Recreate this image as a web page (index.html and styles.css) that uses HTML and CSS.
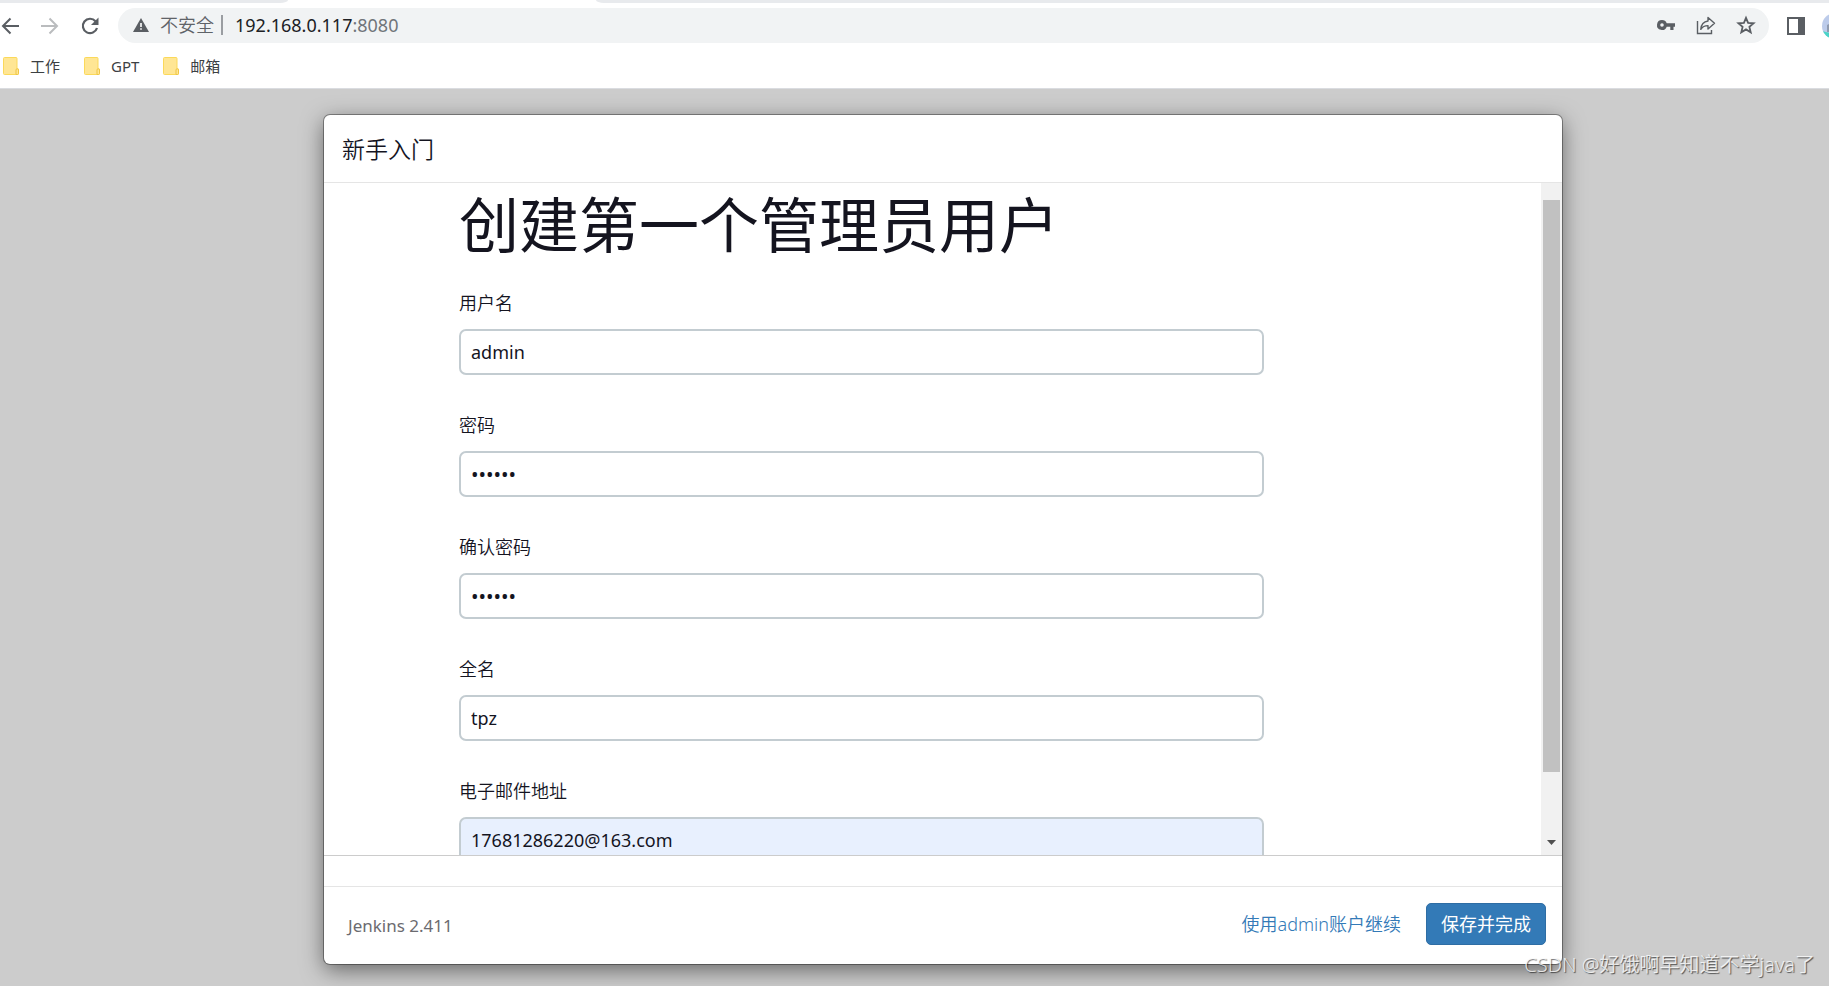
FILE: index.html
```html
<!DOCTYPE html>
<html lang="zh-CN">
<head>
<meta charset="utf-8">
<title>新手入门 [Jenkins]</title>
<link rel="stylesheet" href="styles.css">
</head>
<body>
<header class="browser">
  <div class="tabstrip"><span class="tab-left"></span><span class="tab-right"></span></div>
  <div class="toolbar">
    <nav class="nav-buttons">
      <button type="button" class="icon-button" aria-label="后退"><svg width="20" height="20" viewBox="0 0 20 20" fill="none" stroke="#5a5e63" stroke-width="2"><path d="M19 10H3M10.500 2.500L3 10l7.500 7.500"/></svg></button>
      <button type="button" class="icon-button" aria-label="前进"><svg width="20" height="20" viewBox="0 0 20 20" fill="none" stroke="#babcbe" stroke-width="2"><path d="M1 10h16M9.500 2.500L17 10l-7.500 7.500"/></svg></button>
      <button type="button" class="icon-button" aria-label="重新加载"><svg width="20" height="20" viewBox="0 0 20 20"><path d="M15.500 5.200A7.200 7.200 0 1 0 17 12" fill="none" stroke="#5a5e63" stroke-width="2.200"/><path d="M18.500 1.500v7.500H11z" fill="#5a5e63"/></svg></button>
    </nav>
    <div class="omnibox">
      <button type="button" class="security"><svg width="16" height="14" viewBox="0 0 16 14"><path d="M8 0l8 14H0z" fill="#5a5e63"/><path d="M7.200 5h1.600v4H7.200zM7.200 10.200h1.600v1.600H7.200z" fill="#fff"/></svg><span>不安全</span></button>
      <span class="separator"></span>
      <div class="url">192.168.0.117<span class="port">:8080</span></div>
      <div class="omni-actions">
        <button type="button" class="icon-button" aria-label="密码"><svg width="20" height="20" viewBox="0 0 20 20"><path fill="#5a5e63" fill-rule="evenodd" d="M6 5a5 5 0 1 0 4.700 6.700h3.600V15h3.200v-3.300H19V8.300h-8.300A5 5 0 0 0 6 5zm0 3.200a1.800 1.800 0 1 1 0 3.600 1.800 1.800 0 0 1 0-3.600z"/></svg></button>
        <button type="button" class="icon-button" aria-label="分享"><svg width="20" height="20" viewBox="0 0 20 20" fill="none" stroke="#5a5e63" stroke-width="1.400"><path d="M1.500 6v12.500h14V15"/><path d="M12 2.500l6.500 5.800L12 14v-3.400c-3.300 0-5.500 1-7.200 3.700.4-4.500 2.800-7.700 7.200-8.300z" stroke-linejoin="round"/></svg></button>
        <button type="button" class="icon-button" aria-label="收藏"><svg width="20" height="20" viewBox="0 0 20 20"><path d="M10 2.800l2.100 5.100 5.500.4-4.200 3.600 1.300 5.400L10 14.400l-4.700 2.900 1.300-5.400-4.200-3.600 5.500-.4z" fill="none" stroke="#5a5e63" stroke-width="1.800"/></svg></button>
      </div>
    </div>
    <button type="button" class="icon-button" aria-label="侧边栏"><svg width="20" height="20" viewBox="0 0 20 20"><path fill="#5a5e63" fill-rule="evenodd" d="M1 1h18v18H1zm2 2v14h9V3z"/></svg></button>
    <button type="button" class="avatar" aria-label="个人资料"><svg width="26" height="26" viewBox="0 0 26 26"><defs><clipPath id="round"><circle cx="13" cy="13" r="13"/></clipPath></defs><g clip-path="url(#round)"><path fill="#bccbea" d="M0 0h26v26H0z"/><path fill="#8f9bb0" d="M5 12l4-2v9H5z"/><path fill="#4bd5c8" d="M0 18l8 2h18v6H0z"/></g></svg></button>
  </div>
  <nav class="bookmarks">
    <a class="bookmark" href="#"><svg class="folder" viewBox="0 0 16 18"><path d="M.5 1.500a1 1 0 0 1 1-1H13a1 1 0 0 1 1 1V12h1.500v4.500a1 1 0 0 1-1 1h-13a1 1 0 0 1-1-1z" fill="#ffe694" stroke="#fbd95a"/><path d="M13 17.500V13a1.200 1.200 0 0 1 2.500 0v3.500a1 1 0 0 1-1 1z" fill="#ffe694" stroke="#efc545"/></svg>工作</a>
    <a class="bookmark" href="#"><svg class="folder" viewBox="0 0 16 18"><path d="M.5 1.500a1 1 0 0 1 1-1H13a1 1 0 0 1 1 1V12h1.500v4.500a1 1 0 0 1-1 1h-13a1 1 0 0 1-1-1z" fill="#ffe694" stroke="#fbd95a"/><path d="M13 17.500V13a1.200 1.200 0 0 1 2.500 0v3.500a1 1 0 0 1-1 1z" fill="#ffe694" stroke="#efc545"/></svg>GPT</a>
    <a class="bookmark" href="#"><svg class="folder" viewBox="0 0 16 18"><path d="M.5 1.500a1 1 0 0 1 1-1H13a1 1 0 0 1 1 1V12h1.500v4.500a1 1 0 0 1-1 1h-13a1 1 0 0 1-1-1z" fill="#ffe694" stroke="#fbd95a"/><path d="M13 17.500V13a1.200 1.200 0 0 1 2.500 0v3.500a1 1 0 0 1-1 1z" fill="#ffe694" stroke="#efc545"/></svg>邮箱</a>
  </nav>
</header>
<main class="page">
  <section class="modal">
    <header class="modal-header"><h2 class="modal-title">新手入门</h2></header>
    <div class="modal-body">
      <form class="setup-form" id="setup">
        <h1 class="form-title">创建第一个管理员用户</h1>
        <div class="field"><label for="username">用户名</label><input id="username" type="text" value="admin"></div>
        <div class="field"><label for="password">密码</label><input id="password" type="password" value="123456"></div>
        <div class="field"><label for="confirm">确认密码</label><input id="confirm" type="password" value="123456"></div>
        <div class="field"><label for="fullname">全名</label><input id="fullname" type="text" value="tpz"></div>
        <div class="field"><label for="email">电子邮件地址</label><input id="email" class="autofilled" type="text" value="17681286220@163.com"></div>
      </form>
      <div class="scrollbar">
        <div class="scroll-track"><div class="scroll-thumb"></div></div>
        <svg class="scroll-arrow" viewBox="0 0 9 5"><path d="M0 0h9L4.500 5z" fill="#505050"/></svg>
      </div>
    </div>
    <div class="body-gap"></div>
    <footer class="modal-footer">
      <span class="version">Jenkins 2.411</span>
      <a class="skip-link" href="#">使用admin账户继续</a>
      <button class="save-button" type="submit" form="setup">保存并完成</button>
    </footer>
  </section>
</main>
<div class="watermark">CSDN @好饿啊早知道不学java了</div>
</body>
</html>
```
FILE: styles.css
```css
* {
  box-sizing: border-box;
}

body {
  margin: 0;
  height: 100vh;
  display: flex;
  flex-direction: column;
  overflow: hidden;
  background: #ccc;
  color: #14141f;
  font-family: "Noto Sans", "Noto Sans CJK SC", sans-serif;
  font-size: 18px;
  line-height: 26px;
}

button {
  font: inherit;
  border: 0;
  padding: 0;
  background: none;
  color: inherit;
}

svg {
  display: block;
  flex: none;
}

/* Browser chrome */
.browser {
  flex: none;
  background: #fff;
  border-bottom: 1px solid #dadce0;
}

.tabstrip {
  display: flex;
  height: 3px;
  gap: 308px;
}

.tab-left,
.tab-right {
  background: #e8eaed;
}

.tab-left {
  width: 288px;
  border-bottom-right-radius: 8px 3px;
}

.tab-right {
  flex: 1;
  border-bottom-left-radius: 8px 3px;
}

.toolbar {
  display: flex;
  align-items: center;
  padding: 5px 0 0;
  overflow: hidden;
}

.nav-buttons,
.omni-actions {
  display: flex;
  gap: 20px;
}

.omnibox {
  flex: 1;
  display: flex;
  align-items: center;
  height: 35px;
  margin: 0 17px 0 18px;
  padding: 0 13px 1px 15px;
  border-radius: 18px;
  background: #f1f3f4;
}

.security {
  display: flex;
  align-items: center;
  gap: 11px;
  color: #5f6368;
  font-weight: 350;
}

.separator {
  width: 2px;
  height: 20px;
  margin: 0 12px 0 7px;
  background: #9a9da1;
}

.url {
  flex: 1;
  color: #202124;
}

.port {
  color: #70757a;
}

.avatar {
  width: 7px;
  margin-left: 16px;
  overflow: hidden;
}

.bookmarks {
  display: flex;
  gap: 24px;
  padding: 10px 3px 9px;
}

.bookmark {
  display: flex;
  align-items: center;
  gap: 11px;
  color: #3c4043;
  font-size: 15px;
  text-decoration: none;
}

.folder {
  width: 16px;
  height: 18px;
}

/* Setup wizard */
.page {
  flex: 1;
  min-height: 0;
  display: flex;
  padding: 26px 267px 22px 324px;
}

.modal {
  flex: 1;
  min-width: 0;
  display: flex;
  flex-direction: column;
  border-radius: 6px;
  background: #fff;
  box-shadow: 0 0 0 1px rgba(0, 0, 0, 0.35), 0 6px 22px rgba(0, 0, 0, 0.5);
}

.modal-header {
  padding: 19px 18px 17px;
  border-bottom: 1px solid #e5e5e5;
}

.modal-title {
  margin: 0;
  font-size: 23px;
  font-weight: 350;
  line-height: 31px;
}

.modal-body {
  flex: 1;
  min-height: 0;
  display: flex;
  overflow: hidden;
}

.setup-form {
  flex: 1;
  padding: 2px 277px 0 135px;
}

.form-title {
  margin: 0 0 25px;
  font-size: 60px;
  font-weight: 400;
  line-height: 80px;
}

.field {
  display: flex;
  flex-direction: column;
  gap: 13px;
  margin-bottom: 37px;
}

.field label {
  font-weight: 350;
}

.field input {
  width: 100%;
  height: 46px;
  padding: 0 10px;
  border: 2px solid #c3ccd1;
  border-radius: 7px;
  background: #fff;
  color: #14141f;
  font: inherit;
  outline: 0;
}

.field input[type="password"] {
  font-size: 20px;
}

.field .autofilled {
  background: #e8f0fe;
}

.scrollbar {
  width: 21px;
  display: flex;
  flex-direction: column;
  align-items: center;
  padding: 17px 0 10px;
  background: #f1f1f1;
}

.scroll-track {
  flex: 1;
  width: 17px;
}

.scroll-thumb {
  height: calc(100% - 68px);
  background: #c1c1c1;
}

.scroll-arrow {
  width: 9px;
  height: 5px;
}

.body-gap {
  height: 31px;
  border-top: 1px solid #ccc;
}

.modal-footer {
  display: flex;
  align-items: center;
  padding: 16px 16px 19px 24px;
  border-top: 1px solid #e5e5e5;
}

.version {
  flex: 1;
  padding-top: 4px;
  color: #6b6b70;
  font-size: 17px;
}

.skip-link {
  margin-right: 25px;
  color: #337ab7;
  font-weight: 350;
  text-decoration: none;
}

.save-button {
  height: 42px;
  padding: 0 14px;
  border: 1px solid #2e6da4;
  border-radius: 5px;
  background: #337ab7;
  color: #fff;
}

.watermark {
  position: absolute;
  right: 14px;
  bottom: 8px;
  color: rgba(255, 255, 255, 0.8);
  font-size: 20px;
  font-weight: 350;
  text-shadow: 1px 1px 1px rgba(0, 0, 0, 0.6);
}
```
